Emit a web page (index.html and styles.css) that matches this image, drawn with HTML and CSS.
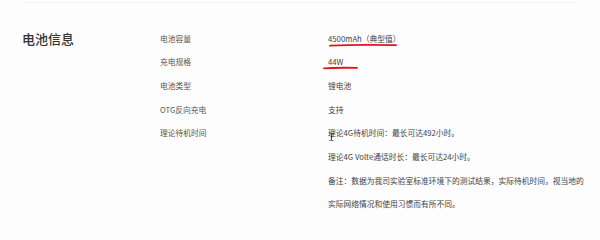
FILE: index.html
```html
<!DOCTYPE html>
<html lang="zh-CN">
<head>
<meta charset="utf-8">
<link rel="stylesheet" href="styles.css">
</head>
<body>
<section class="battery">
  <h2 class="title">电池信息</h2>
  <dl class="specs">
    <dt>电池容量</dt>
    <dd><span class="mark mark-a">4500mAh（典型值）<svg class="stroke" viewBox="0 0 70 4" preserveAspectRatio="none"><path d="M1 2.6 Q 30 1.2 69 2.2" /></svg></span></dd>
    <dt>充电规格</dt>
    <dd><span class="mark mark-b">44W<svg class="stroke" viewBox="0 0 36 4" preserveAspectRatio="none"><path d="M1 2.4 Q 12 1.4 35 1.9" /></svg></span></dd>
    <dt>电池类型</dt>
    <dd>锂电池</dd>
    <dt>OTG反向充电</dt>
    <dd>支持</dd>
    <dt>理论待机时间</dt>
    <dd class="notes">
      <p class="cursor-host">理论4G待机时间：最长可达492小时。<svg class="ibeam" viewBox="0 0 5 8"><path d="M0.5 0.5 H1.5 Q2.5 0.5 2.5 1.5 V6.5 Q2.5 7.5 1.5 7.5 H0.5 M4.5 0.5 H3.5 Q2.5 0.5 2.5 1.5 M2.5 6.5 Q2.5 7.5 3.5 7.5 H4.5 M1.5 4 H3.5"/></svg></p>
      <p>理论4G Volte通话时长：最长可达24小时。</p>
      <p>备注：数据为我司实验室标准环境下的测试结果，实际待机时间，视当地的实际网络情况和使用习惯而有所不同。</p>
    </dd>
  </dl>
</section>
</body>
</html>
```
FILE: styles.css
```css
html, body {
  margin: 0;
  padding: 0;
  background: #fdfdfd;
}
body {
  width: 600px;
  height: 240px;
  overflow: hidden;
  font-family: "Noto Sans CJK SC", "Noto Sans", sans-serif;
  color: #444;
}
.battery {
  display: flex;
  margin: 2px 22px 0 22px;
  border-top: 1px solid #f1f1f1;
  padding-top: 23.5px;
}
.title {
  margin: 0;
  width: 138px;
  flex: none;
  font-size: 13px;
  line-height: 23.7px;
  font-weight: 500;
  color: #333;
}
.specs {
  margin: 0;
  display: grid;
  grid-template-columns: 168px 256px;
  font-size: 7.75px;
  line-height: 23.7px;
}
.specs dt {
  color: #555;
}
.specs dd {
  margin: 0;
  color: #444;
}
.notes p {
  margin: 0;
}
.mark {
  position: relative;
  display: inline-block;
}
.stroke {
  position: absolute;
  height: 4px;
  fill: none;
  stroke: #e5141b;
  stroke-width: 1.8;
  stroke-linecap: round;
}
.mark-a .stroke {
  left: 1px;
  width: 68px;
  top: 16px;
}
.mark-b .stroke {
  left: -5px;
  width: 35px;
  top: 15.5px;
}
.cursor-host {
  position: relative;
}
.ibeam {
  position: absolute;
  left: 0.5px;
  top: 12px;
  width: 5px;
  height: 8px;
  fill: none;
  stroke: #222;
  stroke-width: 0.8;
}
```
